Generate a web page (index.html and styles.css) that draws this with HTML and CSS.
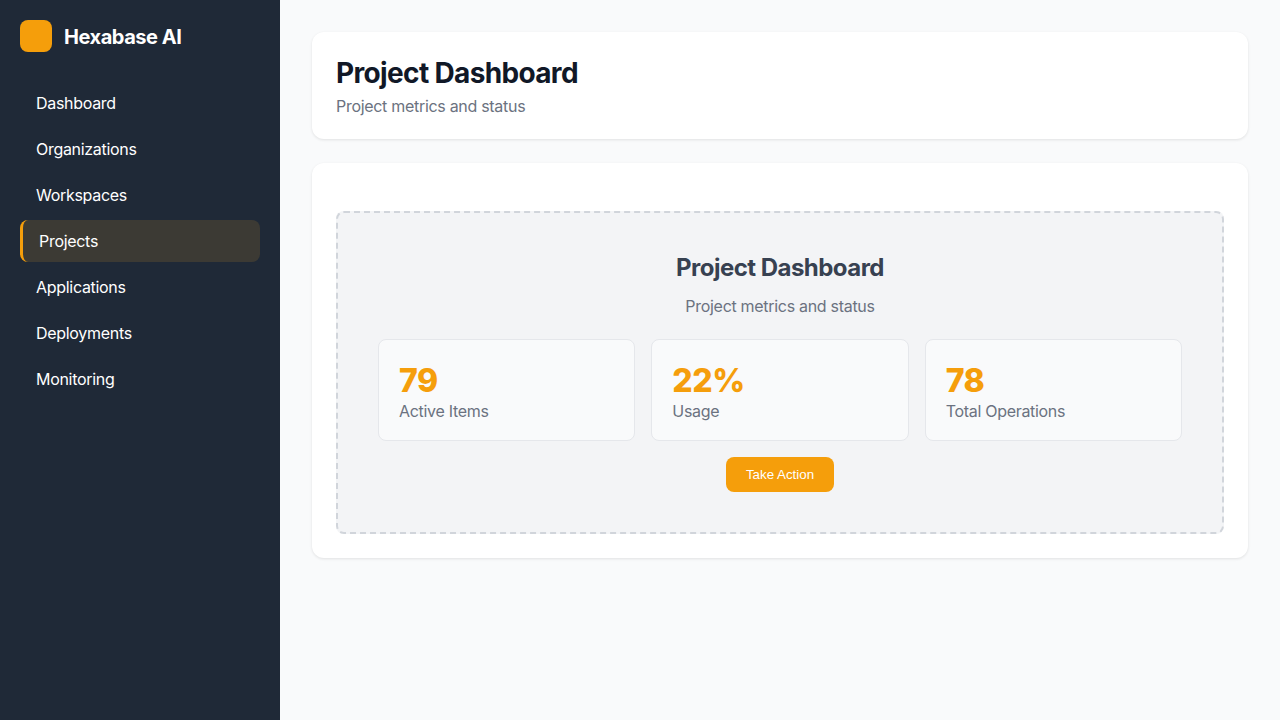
FILE: index.html
```html
<!DOCTYPE html>
<html lang="en">
<head>
    <meta charset="UTF-8">
    <meta name="viewport" content="width=device-width, initial-scale=1.0">
    <title>Project Dashboard</title>
    <link rel="stylesheet" href="styles.css">
</head>
<body>
    <!-- Sidebar -->
    <aside class="sidebar">
        <div class="logo">
            <div class="logo-mark"></div>
            <span class="logo-text">Hexabase AI</span>
        </div>
        <nav class="nav">
            <a class="nav-item" href="#">Dashboard</a>
            <a class="nav-item" href="#">Organizations</a>
            <a class="nav-item" href="#">Workspaces</a>
            <a class="nav-item active" href="#">Projects</a>
            <a class="nav-item" href="#">Applications</a>
            <a class="nav-item" href="#">Deployments</a>
            <a class="nav-item" href="#">Monitoring</a>
        </nav>
    </aside>

    <main class="main">
        <!-- Page header -->
        <header class="card page-header">
            <h1>Project Dashboard</h1>
            <p>Project metrics and status</p>
        </header>

        <!-- Content -->
        <section class="card content">
            <div class="placeholder">
                <h2>Project Dashboard</h2>
                <p class="placeholder-sub">Project metrics and status</p>
                <div class="stats">
                    <div class="stat">
                        <div class="stat-value">79</div>
                        <div class="stat-label">Active Items</div>
                    </div>
                    <div class="stat">
                        <div class="stat-value">22%</div>
                        <div class="stat-label">Usage</div>
                    </div>
                    <div class="stat">
                        <div class="stat-value">78</div>
                        <div class="stat-label">Total Operations</div>
                    </div>
                </div>
                <button class="action-btn" type="button">Take Action</button>
            </div>
        </section>
    </main>
</body>
</html>
```

FILE: styles.css
```css
* {
    box-sizing: border-box;
}

body {
    margin: 0;
    height: 720px;
    display: flex;
    overflow: hidden;
    font-family: Inter, "Liberation Sans", sans-serif;
    background-color: #f9fafb;
}

/* Sidebar */
.sidebar {
    width: 280px;
    flex-shrink: 0;
    background-color: #1f2937;
    padding: 20px;
}

.logo {
    display: flex;
    align-items: center;
    gap: 12px;
    height: 32px;
    margin-bottom: 30px;
}

.logo-mark {
    width: 32px;
    height: 32px;
    border-radius: 8px;
    background-color: #f59e0b;
}

.logo-text {
    padding-top: 2px;
    color: #fff;
    font-size: 20px;
    font-weight: 700;
    letter-spacing: -0.45px;
}

.nav {
    display: flex;
    flex-direction: column;
    gap: 4px;
}

.nav-item {
    display: block;
    height: 42px;
    padding: 12px 16px;
    border-radius: 8px;
    color: #fff;
    font-size: 16px;
    font-weight: 400;
    letter-spacing: -0.3px;
    line-height: 19px;
    text-decoration: none;
}

.nav-item.active {
    background-color: #3c3a34;
    border-left: 3px solid #f59e0b;
}

/* Main area */
.main {
    flex: 1;
    padding: 32px;
    display: flex;
    flex-direction: column;
    gap: 24px;
}

.card {
    background-color: #fff;
    border-radius: 12px;
    padding: 24px;
    box-shadow: 0 1px 3px rgba(0, 0, 0, 0.1);
}

.page-header {
    padding-bottom: 23px;
}

.page-header h1 {
    margin: 0 0 6px;
    color: #111827;
    font-size: 28px;
    font-weight: 700;
    letter-spacing: -0.65px;
    line-height: 35px;
}

.page-header p {
    margin: 0;
    color: #6b7280;
    font-size: 16px;
    letter-spacing: -0.3px;
    line-height: 19px;
}

.content {
    padding-top: 48px;
}

.placeholder {
    background-color: #f3f4f6;
    border: 2px dashed #d1d5db;
    border-radius: 8px;
    padding: 40px;
    text-align: center;
}

.placeholder h2 {
    margin: 0 0 15px;
    color: #374151;
    font-size: 24px;
    font-weight: 700;
    letter-spacing: -0.53px;
    line-height: 29px;
}

.placeholder-sub {
    margin: 0 0 23px;
    color: #6b7280;
    font-size: 16px;
    letter-spacing: -0.3px;
    line-height: 19px;
}

.stats {
    display: grid;
    grid-template-columns: repeat(3, 1fr);
    gap: 16px;
    margin-bottom: 16px;
}

.stat {
    background-color: #f9fafb;
    border: 1px solid #e5e7eb;
    border-radius: 8px;
    padding: 21px 20px 19px;
    text-align: left;
}

.stat-value {
    color: #f59e0b;
    font-size: 32px;
    font-weight: 800;
    letter-spacing: -0.4px;
    line-height: 40px;
}

.stat-label {
    margin-top: 1px;
    color: #6b7280;
    font-size: 16px;
    letter-spacing: -0.3px;
    line-height: 19px;
}

.action-btn {
    display: block;
    margin: 0 auto;
    width: 108px;
    height: 35px;
    border: none;
    border-radius: 8px;
    background-color: #f59e0b;
    color: #fff;
    font-family: "Liberation Sans", Arial, sans-serif;
    font-size: 13.33px;
}
```
